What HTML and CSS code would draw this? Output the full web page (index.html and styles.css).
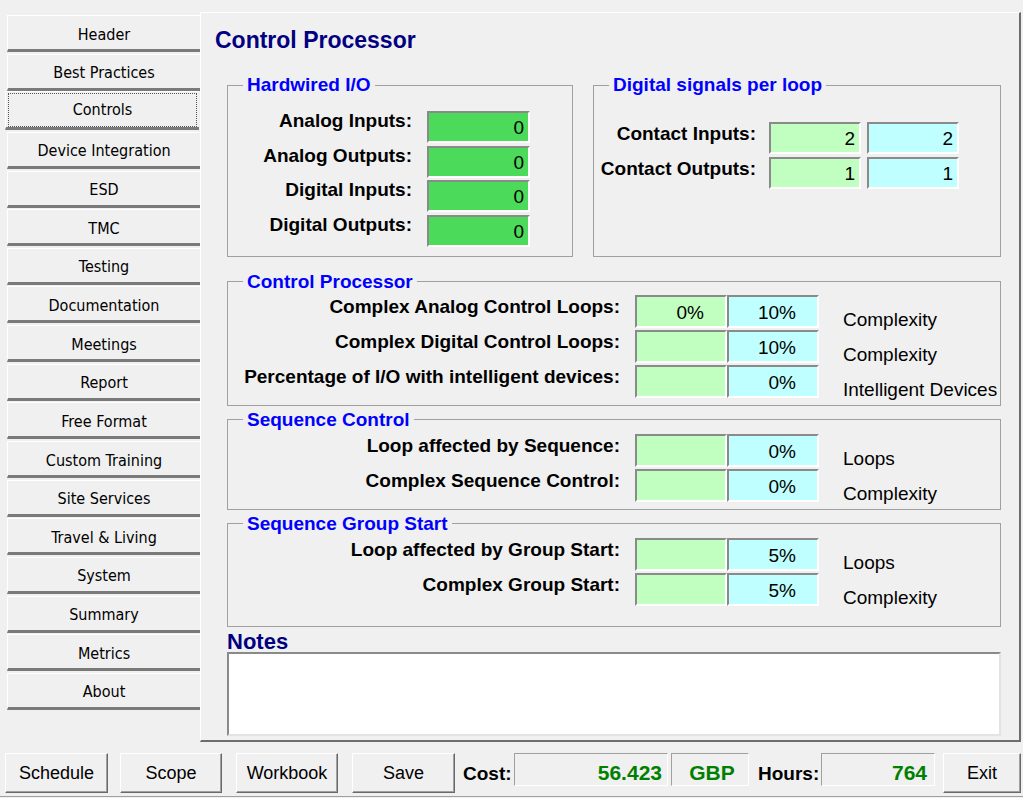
FILE: index.html
```html
<!DOCTYPE html>
<html lang="en">
<head>
    <meta charset="UTF-8">
    <title>Control Processor</title>
    <link rel="stylesheet" href="styles.css">
</head>
<body>

<div class="window">
    <div class="workspace">
        <!-- left tab list -->
        <nav class="tabs">
            <button class="tab">Header</button>
            <button class="tab">Best Practices</button>
            <button class="tab selected"><span class="focus">Controls</span></button>
            <button class="tab">Device Integration</button>
            <button class="tab">ESD</button>
            <button class="tab">TMC</button>
            <button class="tab">Testing</button>
            <button class="tab">Documentation</button>
            <button class="tab">Meetings</button>
            <button class="tab">Report</button>
            <button class="tab">Free Format</button>
            <button class="tab">Custom Training</button>
            <button class="tab">Site Services</button>
            <button class="tab">Travel &amp; Living</button>
            <button class="tab">System</button>
            <button class="tab">Summary</button>
            <button class="tab">Metrics</button>
            <button class="tab">About</button>
        </nav>

        <main class="panel">
            <h1 class="title">Control Processor</h1>

            <div class="top-row">
                <fieldset class="group hardwired">
                    <legend>Hardwired I/O</legend>
                    <div class="row"><label>Analog Inputs:</label><div class="field green">0</div></div>
                    <div class="row"><label>Analog Outputs:</label><div class="field green">0</div></div>
                    <div class="row"><label>Digital Inputs:</label><div class="field green">0</div></div>
                    <div class="row"><label>Digital Outputs:</label><div class="field green">0</div></div>
                </fieldset>

                <fieldset class="group signals">
                    <legend>Digital signals per loop</legend>
                    <div class="row"><label>Contact Inputs:</label><div class="field light">2</div><div class="field cyan">2</div></div>
                    <div class="row"><label>Contact Outputs:</label><div class="field light">1</div><div class="field cyan">1</div></div>
                </fieldset>
            </div>

            <fieldset class="group loops cp">
                <legend>Control Processor</legend>
                <div class="row"><label>Complex Analog Control Loops:</label><div class="field light">0%</div><div class="field cyan">10%</div><span class="desc">Complexity</span></div>
                <div class="row"><label>Complex Digital Control Loops:</label><div class="field light"></div><div class="field cyan">10%</div><span class="desc">Complexity</span></div>
                <div class="row"><label>Percentage of I/O with intelligent devices:</label><div class="field light"></div><div class="field cyan">0%</div><span class="desc">Intelligent Devices</span></div>
            </fieldset>

            <fieldset class="group loops sc">
                <legend>Sequence Control</legend>
                <div class="row"><label>Loop affected by Sequence:</label><div class="field light"></div><div class="field cyan">0%</div><span class="desc">Loops</span></div>
                <div class="row"><label>Complex Sequence Control:</label><div class="field light"></div><div class="field cyan">0%</div><span class="desc">Complexity</span></div>
            </fieldset>

            <fieldset class="group loops sgs">
                <legend>Sequence Group Start</legend>
                <div class="row"><label>Loop affected by Group Start:</label><div class="field light"></div><div class="field cyan">5%</div><span class="desc">Loops</span></div>
                <div class="row"><label>Complex Group Start:</label><div class="field light"></div><div class="field cyan">5%</div><span class="desc">Complexity</span></div>
            </fieldset>

            <div class="notes-label">Notes</div>
            <textarea class="notes"></textarea>
        </main>
    </div>

    <!-- bottom bar -->
    <div class="bottom">
        <button class="btn schedule">Schedule</button>
        <button class="btn scope">Scope</button>
        <button class="btn workbook">Workbook</button>
        <button class="btn save">Save</button>
        <span class="bar-label cost-label">Cost:</span>
        <div class="readout cost">56.423</div>
        <div class="readout currency">GBP</div>
        <span class="bar-label hours-label">Hours:</span>
        <div class="readout hours">764</div>
        <button class="btn exit">Exit</button>
    </div>
</div>

</body>
</html>
```

FILE: styles.css
```css
* {
    margin: 0;
    padding: 0;
    box-sizing: border-box;
}

body {
    width: 1023px;
    height: 798px;
    overflow: hidden;
    background: #f0f0f0;
    color: #000;
    font-family: "Liberation Sans", Arial, sans-serif;
}

.window {
    display: flex;
    flex-direction: column;
    height: 798px;
}

.workspace {
    display: flex;
    height: 742px;
    padding-top: 12px;
}

/* tabs on the left */
.tabs {
    width: 193px;
    margin-left: 7px;
    padding-top: 3px;
    display: flex;
    flex-direction: column;
}

.tab {
    height: 37px;
    margin-bottom: 1.65px;
    padding-top: 3px;
    background: #f0f0f0;
    border: none;
    border-top: 1px solid #fff;
    border-left: 1px solid #fff;
    border-bottom: 3px solid #7a7a7a;
    font-family: "DejaVu Sans Condensed", "Liberation Sans", sans-serif;
    font-size: 16px;
    color: #000;
    display: flex;
    align-items: center;
    justify-content: center;
}

.tab.selected {
    height: 39px;
    margin-top: -1px;
    margin-left: -2px;
    margin-right: 1px;
    padding: 1px 2px 0 2px;
    align-items: stretch;
}

.tab .focus {
    flex: 1;
    display: flex;
    align-items: center;
    justify-content: center;
    border: 1px dotted #555;
    padding-bottom: 2px;
}

/* main panel */
.panel {
    width: 821px;
    height: 730px;
    border-top: 1px solid #fff;
    border-left: 1px solid #fff;
    border-right: 2px solid #6d6d6d;
    border-bottom: 2px solid #6d6d6d;
    padding: 13px 18px 0 26px;
    display: flex;
    flex-direction: column;
}

.title {
    margin-left: -12px;
    font-size: 23px;
    line-height: 28px;
    font-weight: bold;
    color: #000080;
}

.top-row {
    display: flex;
    gap: 20px;
    margin-top: 20px;
}

.group {
    border: 1px solid #a0a0a0;
    min-width: 0;
}

.group legend {
    margin-left: 15px;
    padding: 0 4px;
    font-size: 19px;
    line-height: 22px;
    font-weight: bold;
    color: #0000ff;
}

.row {
    display: flex;
    align-items: flex-start;
}

.row label {
    margin-top: -1px;
    font-size: 19px;
    line-height: 22px;
    font-weight: bold;
    text-align: right;
}

.field {
    height: 33px;
    width: 92px;
    border: 2px solid;
    border-color: #8a8a8a #fff #fff #8a8a8a;
    font-size: 19px;
    line-height: 29px;
    text-align: right;
    padding-right: 4px;
}

.field.green { background: #4cda5a; }
.field.light { background: #c0ffc0; }
.field.cyan { background: #c0ffff; }

/* Hardwired I/O */
.hardwired {
    width: 346px;
    padding: 15px 0 9px 0;
    display: flex;
    flex-direction: column;
    gap: 2.5px;
}

.hardwired label {
    width: 184px;
    margin-right: 15px;
}

.hardwired .field {
    width: 103px;
    height: 32px;
    line-height: 30px;
}

/* Digital signals */
.signals {
    flex: 1;
    padding: 26px 0 0 0;
    display: flex;
    flex-direction: column;
    gap: 3px;
}

.signals label {
    width: 162px;
    margin-right: 13px;
    margin-top: 1px;
}

.signals .field {
    height: 32px;
    line-height: 30px;
}

.signals .field.cyan {
    margin-left: 6px;
}

/* loop groups */
.loops {
    display: flex;
    flex-direction: column;
    gap: 2px;
    margin-top: 3px;
}

.loops .row {
    height: 33px;
}

.loops label {
    width: 392px;
    margin-right: 15px;
    margin-top: 1px;
}

.loops .field {
    padding-right: 21px;
    line-height: 31px;
}

.loops .desc {
    margin-left: 24px;
    padding-top: 14px;
    font-size: 19px;
    line-height: 22px;
}

.cp {
    margin-top: 14px;
    padding: 2px 0 7px 0;
}

.sc {
    padding: 3px 0 7px 0;
}

.sgs {
    padding: 3px 0 20px 0;
}

/* notes */
.notes-label {
    margin-top: 3px;
    font-size: 22px;
    line-height: 24px;
    font-weight: bold;
    color: #000080;
}

.notes {
    margin-top: -2px;
    height: 84px;
    width: 100%;
    resize: none;
    background: #fff;
    border: 2px solid;
    border-color: #8a8a8a #e3e3e3 #e3e3e3 #8a8a8a;
    outline: none;
}

/* bottom bar */
.bottom {
    display: flex;
    align-items: flex-start;
    height: 55px;
    padding: 11px 0 0 5px;
    border-bottom: 1px solid #a0a0a0;
}

.btn {
    height: 40px;
    background: #f0f0f0;
    border: 1px solid;
    border-color: #fff #696969 #696969 #fff;
    box-shadow: inset -1px -1px 0 #a0a0a0;
    font-family: "Liberation Sans", Arial, sans-serif;
    font-size: 18px;
    color: #000;
}

.schedule { width: 103px; }
.scope { width: 102px; margin-left: 12px; }
.workbook { width: 102px; margin-left: 14px; }
.save { width: 103px; margin-left: 14px; }
.exit { width: 78px; margin-left: 8px; }

.bar-label {
    padding-top: 4px;
    font-size: 19px;
    line-height: 33px;
    font-weight: bold;
}

.cost-label { width: 49px; margin-left: 8px; }
.hours-label { width: 62px; margin-left: 9px; }

.readout {
    height: 33px;
    border: 1px solid;
    border-color: #a0a0a0 #fff #fff #a0a0a0;
    padding: 5px 5px 0 0;
    font-size: 21px;
    line-height: 28px;
    font-weight: bold;
    color: #008000;
    text-align: right;
}

.cost { width: 154px; margin-left: 2px; }
.currency { width: 78px; margin-left: 3px; text-align: center; padding-right: 0; padding-left: 4px; }
.hours { width: 114px; margin-left: 1px; padding-right: 7px; }
```
